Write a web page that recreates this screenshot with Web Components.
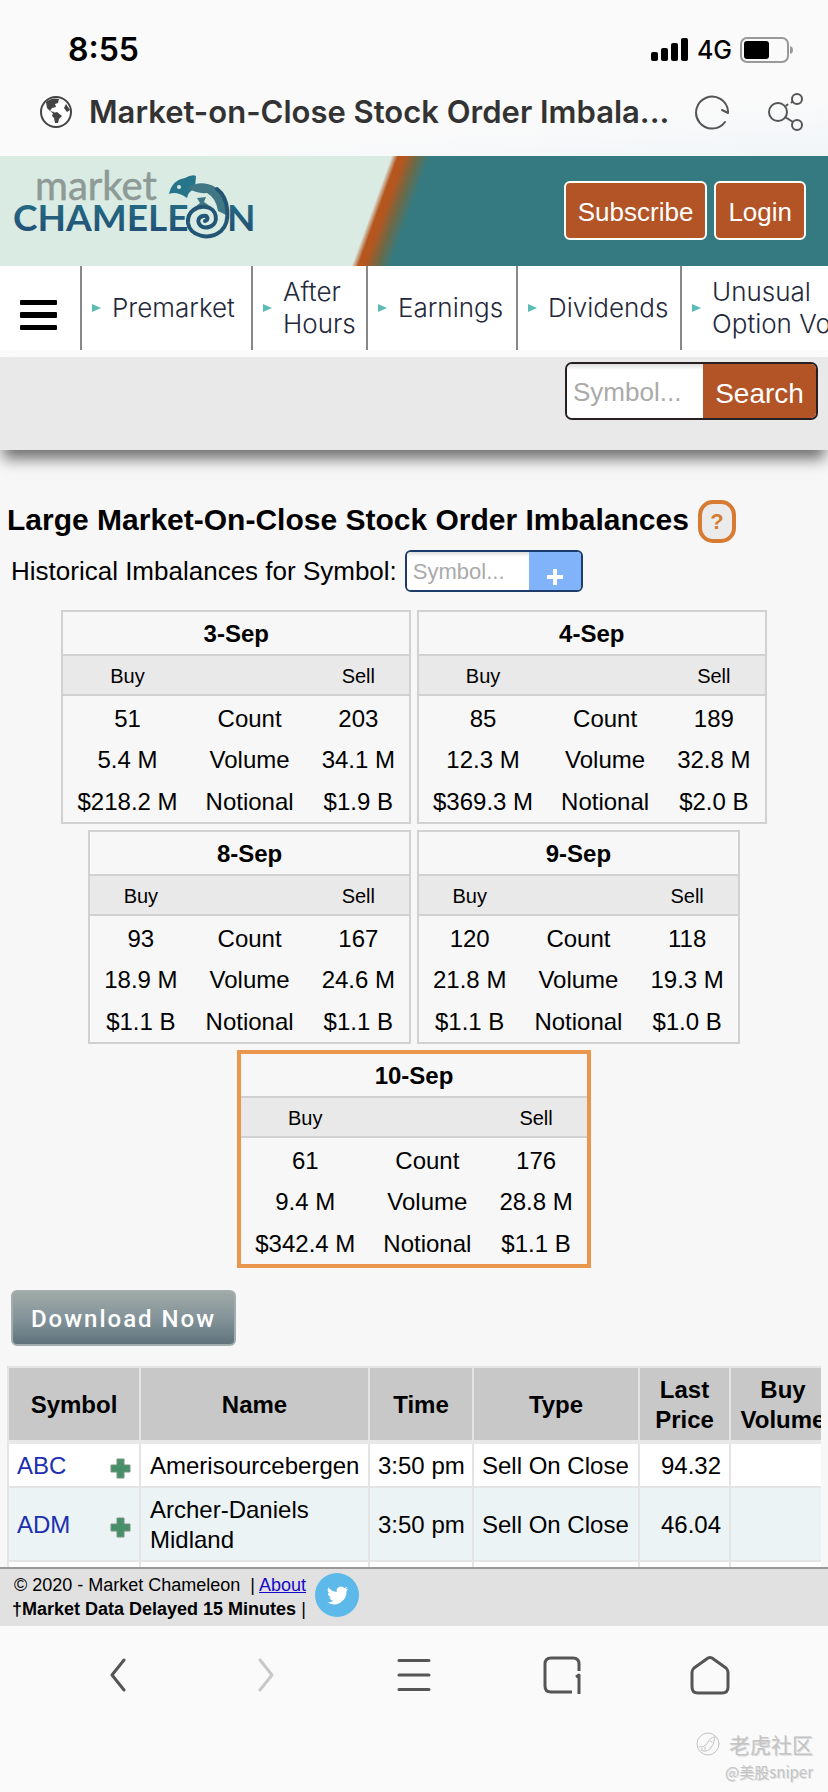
<!DOCTYPE html>
<html lang="en">
<head>
<meta charset="utf-8">
<meta name="viewport" content="width=device-width, initial-scale=1">
<title>Market-on-Close Stock Order Imbalances</title>
<style>
  body { margin: 0; background: #fafafa; color: #000; font-family: "Liberation Sans", Arial, sans-serif; }
</style>
</head>
<body>
<market-page></market-page>

<script>
const define = (name, html, setup) => {
  const tpl = document.createElement('template');
  tpl.innerHTML = html;
  customElements.define(name, class extends HTMLElement {
    constructor() {
      super();
      this.attachShadow({ mode: 'open' }).append(tpl.content.cloneNode(true));
    }
    connectedCallback() { if (setup) setup(this, this.shadowRoot); }
  });
};

/* Phone status line */
define('status-bar', `
<style>
  :host { display: flex; align-items: center; justify-content: space-between; height: 44px; padding: 28px 34px 6px 68px; font-family: Inter, sans-serif; }
  time { font-size: 32px; font-weight: 600; line-height: 44px; }
  .right { display: flex; align-items: center; gap: 8px; font-size: 25px; font-weight: 500; line-height: 44px; }
  svg { display: block; }
</style>
<time>8:55</time>
<div class="right">
  <svg width="38" height="24" viewBox="0 0 38 24" aria-hidden="true"><rect x="0" y="14" width="7" height="9" rx="2"/><rect x="10" y="10" width="7" height="13" rx="2"/><rect x="20" y="5" width="7" height="18" rx="2"/><rect x="30" y="0" width="7" height="23" rx="2"/></svg>
  <span>4G</span>
  <svg width="54" height="26" viewBox="0 0 54 26" aria-hidden="true"><rect x="1" y="1" width="47" height="24" rx="6" fill="none" stroke="#999" stroke-width="2"/><rect x="4" y="4" width="25" height="18" rx="3"/><path d="M50 9q3 1 3 4t-3 4z" fill="#999"/></svg>
</div>`);

/* Browser title row */
define('title-bar', `
<style>
  :host { display: flex; align-items: center; height: 68px; padding: 0 24px 10px 39px; color: #333; font-family: Inter, sans-serif; background: linear-gradient(175deg, #fafafa 60%, #f0f5f8); }
  .t { flex: 1; min-width: 0; margin-left: 16px; font-size: 31px; font-weight: 600; line-height: 44px; white-space: nowrap; }
  button { flex: none; border: 0; padding: 0; background: none; margin-left: 38px; }
  button:first-of-type { margin-left: 0; }
  svg { display: block; flex: none; }
</style>
<svg width="34" height="34" viewBox="0 0 34 34" aria-hidden="true"><circle cx="17" cy="17" r="15" fill="#fff" stroke="#444" stroke-width="2"/><path fill="#444" d="M7 7Q13 2 20 4L19 8 16 9 17 12 13 13 11 16 15 17 16 20 11 16 8 13ZM14 18 18 17 23 21 20 24 19 28 16 28 15 23 13 21ZM27 9 31 15 28 17 25 13Z"/></svg>
<span class="t">Market-on-Close Stock Order Imbala...</span>
<button aria-label="Reload"><svg width="36" height="36" viewBox="0 0 36 36" fill="none" stroke="#555" stroke-width="2"><path d="M31 28A16 16 0 1 1 34 17V19L28 16" stroke-linecap="round" stroke-linejoin="round"/></svg></button>
<button aria-label="Share"><svg width="36" height="40" viewBox="0 0 36 40" fill="none" stroke="#555" stroke-width="2"><circle cx="10" cy="20" r="9"/><circle cx="29" cy="7" r="5"/><circle cx="29" cy="33" r="5"/><path d="M18 14l2-2M23 11l2-2M17 25l8 5"/></svg></button>`);

/* Site brand strip */
define('brand-banner', `
<style>
  :host { display: flex; align-items: center; justify-content: space-between; box-sizing: border-box; height: 110px; padding: 0 22px 2px 13px;
    background: linear-gradient(110deg, #daebe3 368px, #b5561f 374px, #b5561f 380px, #6b6a48 392px, #357a80 404px); }
  .btns { display: flex; gap: 7px; }
  button { height: 59px; padding: 4px 12px 0; border: 2px solid #fff; border-radius: 6px; background: #b25426; color: #fff; font: 26px "Liberation Sans", Arial, sans-serif; }
  svg { display: block; overflow: visible; }
  text { font-family: Lato, sans-serif; }
</style>
<svg width="242" height="100" viewBox="0 -14 242 100" role="img" aria-label="Market Chameleon">
  <defs><linearGradient id="b" x1="0" y1="0" x2="0" y2="1"><stop offset="0" stop-color="#277488"/><stop offset="1" stop-color="#204a72"/></linearGradient></defs>
  <text x="22" y="26" font-size="40" fill="#8d9a96" stroke="#8d9a96" stroke-width=".5">market</text>
  <text x="0" y="57" font-size="37" font-weight="700" fill="url(#b)">CHAMELE</text>
  <text x="214" y="57" font-size="37" font-weight="700" fill="url(#b)">N</text>
  <path fill="#26758a" d="M156 20Q159 6 172 4 179 0 183 2L182 14Q175 18 174 24 164 17 156 20Z"/><circle cx="166" cy="13" r="2" fill="#daebe3"/>
  <path fill="#3f7784" d="M174 14Q188 5 202 13 214 20 215 42L205 37Q203 24 194 19 184 20 174 14Z"/>
  <path fill="#3f7784" d="M184 24l3 5-5 4 8-2 7 1-6-4 2-5z"/>
  <path fill="none" stroke="#235574" stroke-width="4" stroke-linecap="round" d="M204 15C216 24 218 48 208 57 196 67 177 62 175 49 174 37 184 32 193 33 204 34 207 50 196 53 186 56 181 44 190 42 195 41 196 46 192 47"/>
</svg>
<div class="btns"><button>Subscribe</button><button>Login</button></div>`);

/* One entry of the site navigation */
define('nav-item', `
<style>
  :host { display: flex; align-items: center; box-sizing: border-box; height: 84px; padding-left: 10px; border-left: 2px solid #888; }
  i { flex: none; width: 0; height: 0; border: 4px solid transparent; border-left: 9px solid #5cbcb4; border-right: 0; margin-right: 11px; }
  a { color: #23283a; text-decoration: none; font: 300 26px/32px Inter, sans-serif; white-space: nowrap; }
</style>
<i></i><a href="#"><slot></slot></a>`);

define('site-nav', `
<style>
  :host { display: grid; grid-template-columns: 80px 171px 115px 150px 164px 1fr; height: 91px; overflow: hidden; background: linear-gradient(#fff 84px, #fcfcfc 84px); }
  button { align-self: start; justify-self: start; margin: 34px 0 0 20px; padding: 0; border: 0; background: none; }
  svg { display: block; }
</style>
<button aria-label="Menu"><svg width="37" height="30" viewBox="0 0 37 30"><rect width="37" height="5" rx="1"/><rect y="12" width="37" height="6" rx="1"/><rect y="25" width="37" height="5" rx="1"/></svg></button>
<nav-item>Premarket</nav-item>
<nav-item>After<br>Hours</nav-item>
<nav-item>Earnings</nav-item>
<nav-item>Dividends</nav-item>
<nav-item>Unusual<br>Option Volume</nav-item>`);

/* Site-wide symbol search */
define('search-strip', `
<style>
  :host { display: flex; justify-content: flex-end; align-items: flex-start; box-sizing: border-box; height: 93px; padding: 5px 10px 0; position: relative; background: #e9e9e9; box-shadow: 0 12px 14px -3px rgba(0,0,0,.55); }
  form { display: flex; box-sizing: border-box; width: 253px; height: 58px; border: 2px solid #282020; border-radius: 7px; overflow: hidden; background: #fff; }
  input { flex: 1; min-width: 0; border: 0; padding: 2px 6px 0; outline: 0; background: linear-gradient(#ddd, #fff 6px); font: 26px "Liberation Sans", Arial, sans-serif; }
  input::placeholder { color: #aaa; opacity: 1; }
  button { width: 113px; border: 0; padding: 6px 0 0; background: #b25426; color: #fff; font: 28px "Liberation Sans", Arial, sans-serif; }
</style>
<form><input aria-label="Symbol" placeholder="Symbol..."><button type="button">Search</button></form>`);

define('page-heading', `
<style>
  :host { display: flex; align-items: flex-start; gap: 9px; height: 43px; }
  h1 { margin: 0; font-size: 30px; line-height: 40px; white-space: nowrap; }
  button { box-sizing: border-box; width: 38px; height: 43px; padding: 0; border: 4px solid #d67b31; border-radius: 15px; background: #ebebeb; color: #d67b31; font: bold 22px "Liberation Sans", Arial, sans-serif; }
</style>
<h1><slot></slot></h1><button aria-label="Help">?</button>`);

define('symbol-form', `
<style>
  :host { display: block; padding-left: 4px; }
  form { display: flex; align-items: center; gap: 8px; height: 42px; }
  label { font-size: 26px; white-space: nowrap; }
  .box { display: flex; box-sizing: border-box; width: 178px; height: 42px; border: 2px solid #1d3c6b; border-radius: 6px; overflow: hidden; background: #fff; }
  input { flex: 1; min-width: 0; border: 0; padding: 2px 6px 0; outline: 0; background: linear-gradient(#ddd, #fff 5px); font: 22px "Liberation Sans", Arial, sans-serif; }
  input::placeholder { color: #aaa; opacity: 1; }
  button { display: grid; place-items: center; width: 52px; border: 0; padding: 12px 0 0; background: #80b3fa; }
</style>
<form><label for="sym">Historical Imbalances for Symbol:</label>
<div class="box"><input id="sym" placeholder="Symbol..."><button type="button" aria-label="Add"><svg width="16" height="16" viewBox="0 0 16 16"><path d="M8 0v16M0 8h16" stroke="#fff" stroke-width="4"/></svg></button></div></form>`);

/* Summary of one trading day: values are "count|volume|notional" */
define('day-summary', `
<style>
  :host { display: block; box-sizing: border-box; border: 2px solid #d1d1d1; }
  :host([current]) { border: 4px solid #ea964d; }
  table { border-collapse: separate; border-spacing: 0; text-align: center; font-size: 24px; white-space: nowrap; }
  th, td { padding: 0 14px; }
  caption { height: 42px; line-height: 44px; font-weight: bold; border-bottom: 2px solid #d1d1d1; }
  thead th { box-sizing: border-box; height: 40px; padding-top: 2px; font-size: 20px; font-weight: normal; background: #e9e9e9; border-bottom: 2px solid #d1d1d1; }
  tbody td, tbody th { height: 41px; line-height: 41px; font-weight: normal; }
  tbody tr:first-child > * { padding-top: 2px; }
  tbody tr:last-child > * { padding-top: 1px; }
</style>
<table><caption></caption><thead><tr><th scope="col">Buy</th><th></th><th scope="col">Sell</th></tr></thead><tbody></tbody></table>`,
(el, root) => {
  root.querySelector('caption').textContent = el.getAttribute('day');
  const buy = el.getAttribute('buy').split('|'), sell = el.getAttribute('sell').split('|');
  root.querySelector('tbody').innerHTML = ['Count', 'Volume', 'Notional']
    .map((n, i) => `<tr><td>${buy[i]}</td><th scope="row">${n}</th><td>${sell[i]}</td></tr>`).join('');
});

define('day-list', `
<style>:host { display: flex; flex-wrap: wrap; justify-content: center; gap: 6px; padding: 0 47px; }</style>
<slot></slot>`);

define('download-button', `
<style>
  :host { display: block; padding-left: 4px; }
  button { height: 56px; width: 225px; padding: 2px 0 0; border: 2px solid #a4adad; border-radius: 6px; background: linear-gradient(#a0a9a7, #84949a 50%, #60737c); color: #fff; font: 500 24px Roboto, sans-serif; letter-spacing: 2px; white-space: nowrap; }
</style>
<button><slot></slot></button>`);

define('order-table', `
<style>
  :host { display: block; overflow: hidden; }
  table { width: 830px; table-layout: fixed; border-collapse: collapse; font-size: 24px; line-height: 30px; white-space: nowrap; }
  th, td { border: 2px solid #e4e4e4; padding: 7px 8px 5px; }
  th { background: #c8c8c8; border-bottom: 4px solid #e8e8e8; }
  td { background: #fff; text-align: left; }
  tr:nth-child(even) td { background: #ebf3f5; }
  .name { padding-left: 9px; }
  .num { text-align: right; }
  .sym { display: flex; align-items: center; justify-content: space-between; }
  a { color: #1c2fb0; text-decoration: none; }
  button { padding: 4px 0 0; border: 0; background: none; }
  svg { display: block; }
</style>
<table>
  <colgroup><col style="width:132px"><col style="width:229px"><col style="width:104px"><col style="width:166px"><col style="width:91px"><col></colgroup>
  <thead><tr><th scope="col">Symbol</th><th scope="col">Name</th><th scope="col">Time</th><th scope="col">Type</th><th scope="col">Last<br>Price</th><th scope="col">Buy<br>Volume</th></tr></thead>
  <tbody></tbody>
</table>`,
(el, root) => {
  const rows = [['ABC', 'Amerisourcebergen', '94.32'], ['ADM', 'Archer-Daniels<br>Midland', '46.04']];
  root.querySelector('tbody').innerHTML = rows.map(([s, n, p]) => `<tr>
    <td><div class="sym"><a href="#">${s}</a><button aria-label="Add ${s}"><svg width="21" height="21" viewBox="0 0 21 21"><path d="M7 1h7v6h6v7h-6v6H7v-6H1V7h6z" fill="#48906a" stroke="#78927f"/></svg></button></div></td>
    <td class="name">${n}</td><td>3:50 pm</td><td>Sell On Close</td><td class="num">${p}</td><td></td></tr>`).join('')
    + '<tr><td>&nbsp;</td><td></td><td></td><td></td><td></td><td></td></tr>';
});

define('site-footer', `
<style>
  :host { display: flex; gap: 9px; box-sizing: border-box; height: 59px; padding: 4px 12px 0; border-top: 2px solid #999; background: #e1e1e1; position: relative; font-size: 18px; line-height: 24px; }
  p { margin: 0; white-space: pre; }
  p:first-child { padding-left: 2px; }
  .text a { color: #1608c8; }
  svg { display: block; }
</style>
<div class="text"><p>© 2020 - Market Chameleon  | <a href="#">About</a></p><p><b>†Market Data Delayed 15 Minutes</b> |</p></div>
<a href="#" aria-label="Twitter"><svg width="44" height="44" viewBox="0 0 44 44"><circle cx="22" cy="22" r="22" fill="#5db9ea"/><path fill="#fff" transform="translate(11 11) scale(.95)" d="M23 4.900a9 9 0 0 1-2.700.7 4.700 4.700 0 0 0 2-2.600 9 9 0 0 1-3 1.200 4.700 4.700 0 0 0-8 4.300A13.400 13.400 0 0 1 2.600 3.600a4.700 4.700 0 0 0 1.500 6.300 4.700 4.700 0 0 1-2.100-.6 4.700 4.700 0 0 0 3.700 4.700 4.700 4.700 0 0 1-2.100.1 4.700 4.700 0 0 0 4.400 3.300A9.500 9.500 0 0 1 1 19.300a13.400 13.400 0 0 0 20.600-11.900A9.600 9.600 0 0 0 23 4.900z"/></svg></a>`);

define('browser-toolbar', `
<style>
  :host { display: flex; flex-direction: column; box-sizing: border-box; height: 166px; background: #fafafa; }
  .icons { display: grid; grid-template-columns: repeat(5, 1fr); padding: 24px 44px 0; height: 50px; }
  button { display: grid; place-items: center; border: 0; padding: 0; background: none; }
  svg { display: block; fill: none; stroke: #555; stroke-width: 3; stroke-linecap: round; stroke-linejoin: round; }
  .mark { display: flex; flex-direction: column; align-items: flex-end; margin-top: 29px; padding-right: 15px; color: #c4c4c4; font-family: "Noto Sans CJK SC", sans-serif; text-shadow: 1px 1px #ddd; }
  .mark div { display: flex; align-items: center; gap: 9px; font-size: 21px; line-height: 30px; }
  .mark span { font-size: 15px; line-height: 26px; }
  .mark svg { stroke: #c4c4c4; stroke-width: 1; }
</style>
<div class="icons">
  <button aria-label="Back"><svg width="16" height="34" viewBox="0 0 16 34"><path d="M14 2 2 17l12 15"/></svg></button>
  <button aria-label="Forward"><svg width="16" height="34" viewBox="0 0 16 34" style="stroke:#c8c8c8"><path d="M2 2l12 15L2 32"/></svg></button>
  <button aria-label="Menu"><svg width="34" height="34" viewBox="0 0 34 34"><path d="M2 2.500h30M2 17h30M2 31.500h30"/></svg></button>
  <button aria-label="Tabs"><svg width="38" height="38" viewBox="0 0 38 38"><path d="M36 15V8q0-6-6-6H8Q2 2 2 8v22q0 6 6 6h21" stroke-linecap="butt"/><path d="M33 21l3-2v19" stroke-linecap="butt"/></svg></button>
  <button aria-label="Home"><svg width="40" height="40" viewBox="0 0 40 40"><path d="M18 3q2-1 4 0l14 10q2 2 2 4v15q0 6-6 6H8q-6 0-6-6V17q0-2 2-4z"/></svg></button>
</div>
<div class="mark"><div><svg width="24" height="24" viewBox="0 0 24 24" aria-hidden="true"><circle cx="12" cy="12" r="11"/><path d="M3 15q4 1 8-3 3-7 8-7-1 8-5 12-5 4-9 1M14 9l2 1M6 16v2M9 15v3"/></svg>老虎社区</div><span>@美股sniper</span></div>`);

define('market-page', `
<style>
  :host { display: flex; flex-direction: column; height: 100vh; overflow: hidden; }
  status-bar, title-bar, brand-banner, site-nav, search-strip, site-footer, browser-toolbar { flex: none; }
  search-strip { z-index: 1; }
  main { flex: 1; min-height: 0; overflow: hidden; padding: 50px 7px 0; background: #f7f7f7; }
  symbol-form { margin-top: 7px; }
  day-list { margin-top: 18px; }
  download-button { margin-top: 22px; }
  order-table { margin-top: 20px; }
</style>
<status-bar></status-bar>
<title-bar></title-bar>
<brand-banner></brand-banner>
<site-nav></site-nav>
<search-strip></search-strip>
<main>
  <page-heading>Large Market-On-Close Stock Order Imbalances</page-heading>
  <symbol-form></symbol-form>
  <day-list>
    <day-summary day="3-Sep" buy="51|5.4 M|$218.2 M" sell="203|34.1 M|$1.9 B"></day-summary>
    <day-summary day="4-Sep" buy="85|12.3 M|$369.3 M" sell="189|32.8 M|$2.0 B"></day-summary>
    <day-summary day="8-Sep" buy="93|18.9 M|$1.1 B" sell="167|24.6 M|$1.1 B"></day-summary>
    <day-summary day="9-Sep" buy="120|21.8 M|$1.1 B" sell="118|19.3 M|$1.0 B"></day-summary>
    <day-summary current day="10-Sep" buy="61|9.4 M|$342.4 M" sell="176|28.8 M|$1.1 B"></day-summary>
  </day-list>
  <download-button>Download Now</download-button>
  <order-table></order-table>
</main>
<site-footer></site-footer>
<browser-toolbar></browser-toolbar>`);
</script>
</body>
</html>
